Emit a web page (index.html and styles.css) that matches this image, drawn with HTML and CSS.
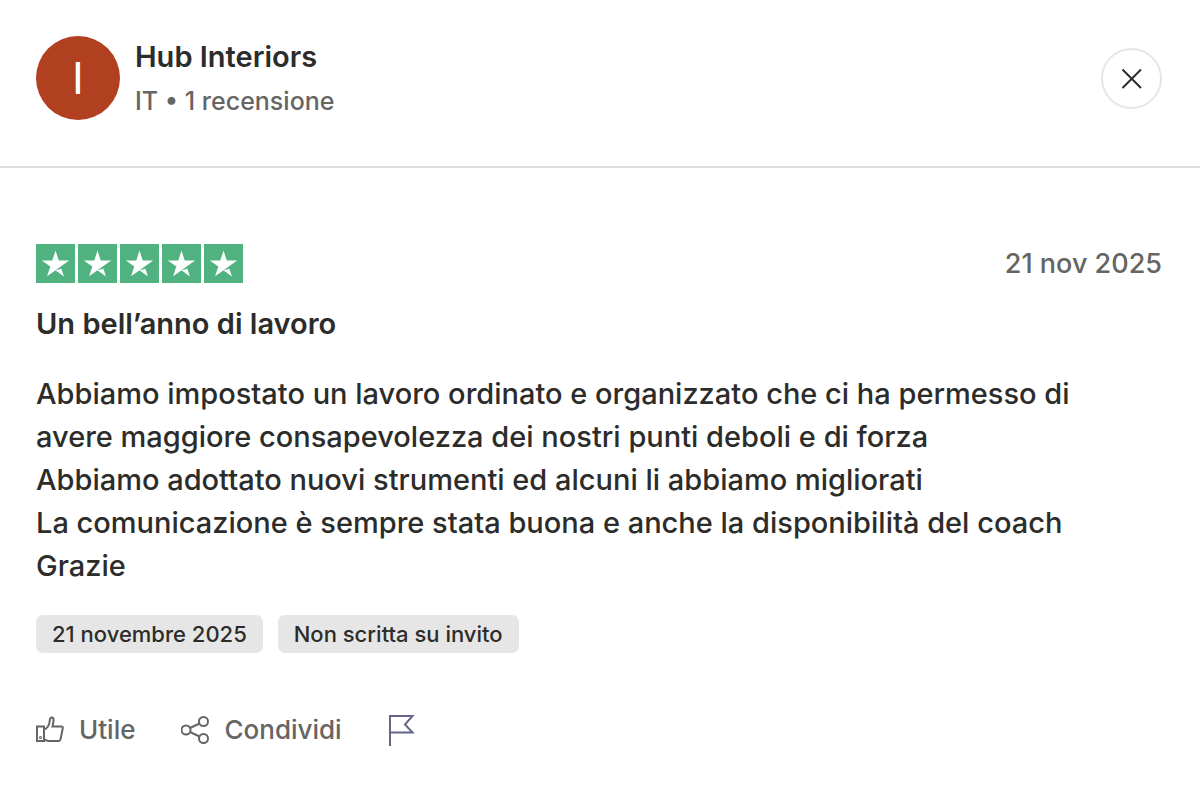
FILE: index.html
```html
<!DOCTYPE html>
<html lang="it">
<head>
<meta charset="utf-8">
<meta name="viewport" content="width=device-width, initial-scale=1">
<title>Recensione di Hub Interiors</title>
<link rel="stylesheet" href="styles.css">
</head>
<body>
<svg class="defs" aria-hidden="true">
  <symbol id="star" viewBox="0 0 96 96">
    <path d="M48 64.700 62.600 61 68.700 79.800ZM81.600 40.400H55.900L48 16.200 40.100 40.400H14.400L35.200 55.400 27.300 79.600 48.100 64.600 60.900 55.400Z"/>
  </symbol>
</svg>
<article class="review">
  <header class="review-header">
    <div class="avatar" aria-hidden="true">I</div>
    <div class="author">
      <div class="author-name">Hub Interiors</div>
      <div class="author-meta">IT • 1 recensione</div>
    </div>
    <button class="close" type="button" aria-label="Chiudi">
      <svg width="22" height="22" viewBox="0 0 22 22"><path d="M1.500 1.500 20 20M20 1.500 1.500 20"/></svg>
    </button>
  </header>
  <section class="review-body">
    <div class="rating-row">
      <div class="stars" role="img" aria-label="5 stelle su 5">
        <svg class="star"><use href="#star"/></svg>
        <svg class="star"><use href="#star"/></svg>
        <svg class="star"><use href="#star"/></svg>
        <svg class="star"><use href="#star"/></svg>
        <svg class="star"><use href="#star"/></svg>
      </div>
      <time class="date" datetime="2025-11-21">21 nov 2025</time>
    </div>
    <h2 class="title">Un bell’anno di lavoro</h2>
    <p class="text">Abbiamo impostato un lavoro ordinato e organizzato che ci ha permesso di avere maggiore consapevolezza dei nostri punti deboli e di forza<br>Abbiamo adottato nuovi strumenti ed alcuni li abbiamo migliorati<br>La comunicazione è sempre stata buona e anche la disponibilità del coach<br>Grazie</p>
    <div class="tags">
      <span class="tag">21 novembre 2025</span>
      <span class="tag">Non scritta su invito</span>
    </div>
    <div class="actions">
      <button class="action" type="button">
        <svg width="28" height="28" viewBox="0 0 28 28"><path d="M1 10.500H8V25H1ZM8 13.500C11 12.500 13 10 13.500 6L14 3Q14.500 1.300 16 1.500 18 2 17.500 5L16.500 10.500H25.500Q27 10.700 26.800 12L24.500 23.500Q24.200 24.800 22.500 25H13Q10.500 24.800 8 23.500"/><circle cx="4.500" cy="21.500" r=".5"/></svg>
        Utile
      </button>
      <button class="action" type="button">
        <svg width="28" height="28" viewBox="0 0 28 28"><circle cx="5" cy="14" r="4.500"/><circle cx="22.500" cy="5.500" r="4.500"/><circle cx="22.500" cy="22.500" r="4.500"/><path d="M9 12 18.500 7.500M9 16 18.500 20.500"/></svg>
        Condividi
      </button>
      <button class="action flag" type="button" aria-label="Segnala">
        <svg width="28" height="32" viewBox="0 0 28 32"><path d="M2 32V2H24.500L17 10.500 24.500 18.500H2"/></svg>
      </button>
    </div>
  </section>
</article>
</body>
</html>
```
FILE: styles.css
```css
* {
  box-sizing: border-box;
}

body {
  margin: 0;
  background: #fff;
  color: #2c2c2a;
  font-family: Inter, "Liberation Sans", sans-serif;
}

button {
  padding: 0;
  border: 0;
  background: none;
  font: inherit;
  cursor: pointer;
}

.defs {
  display: none;
}

.review-header {
  display: flex;
  align-items: flex-start;
  gap: 15px;
  padding: 36px 38px 42px 36px;
  border-bottom: 2px solid #dcdcda;
}

.avatar {
  display: flex;
  align-items: center;
  justify-content: center;
  flex: none;
  width: 84px;
  height: 84px;
  border-radius: 50%;
  background: #b04020;
  color: #fff;
  font-size: 44px;
}

.author {
  flex: 1;
}

.author-name {
  font-size: 29px;
  font-weight: 600;
  line-height: 42px;
}

.author-meta {
  color: #656563;
  font-size: 25px;
  font-weight: 500;
  line-height: 46px;
}

.close {
  display: flex;
  align-items: center;
  justify-content: center;
  width: 61px;
  height: 61px;
  margin-top: 12px;
  border: 2px solid #e6e6e5;
  border-radius: 50%;
}

.close path {
  fill: none;
  stroke: #2c2c2a;
  stroke-width: 2;
}

.review-body {
  padding: 76px 38px 36px 36px;
}

.rating-row {
  display: flex;
  align-items: center;
  justify-content: space-between;
}

.stars {
  display: flex;
  gap: 3px;
}

.star {
  width: 39px;
  height: 39px;
  background: #4fb27f;
  fill: #fff;
}

.date {
  color: #656563;
  font-size: 27px;
  font-weight: 500;
  line-height: 36px;
}

.title {
  margin: 20px 0 27px;
  font-size: 29px;
  font-weight: 600;
  line-height: 42px;
}

.text {
  max-width: 1080px;
  margin: 0 0 28px;
  font-size: 29px;
  font-weight: 500;
  line-height: 43px;
}

.tags {
  display: flex;
  gap: 15px;
}

.tag {
  padding: 0 16px;
  border-radius: 7px;
  background: #e6e6e6;
  font-size: 22px;
  font-weight: 500;
  line-height: 38px;
}

.actions {
  display: flex;
  align-items: center;
  gap: 46px;
  margin-top: 57px;
}

.action {
  display: flex;
  align-items: center;
  gap: 15px;
  color: #656563;
  font-size: 26px;
  font-weight: 500;
  line-height: 40px;
}

.action svg {
  fill: none;
  stroke: currentColor;
  stroke-width: 2;
}

.flag {
  color: #65658a;
}
```
